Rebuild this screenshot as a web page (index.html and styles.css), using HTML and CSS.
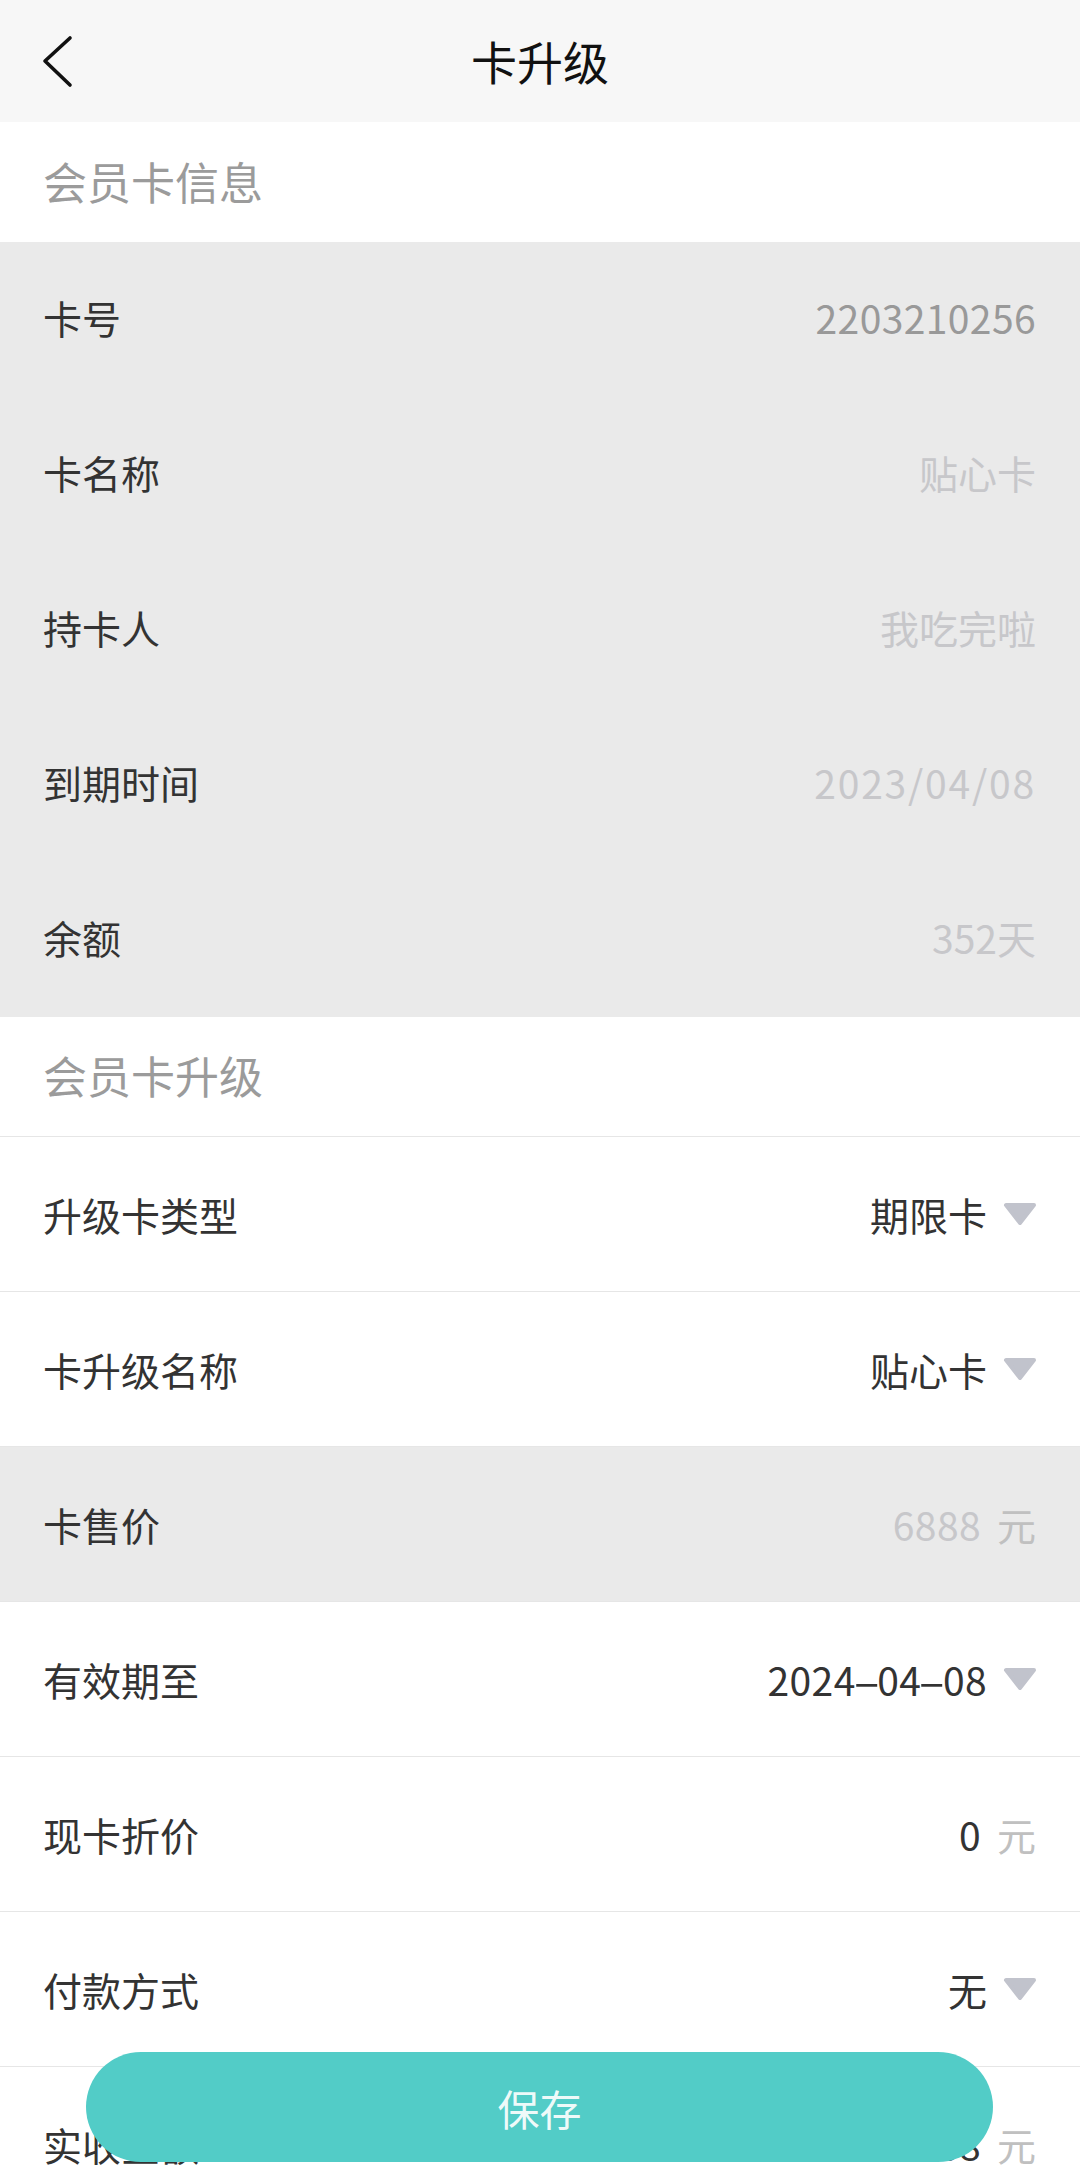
FILE: index.html
```html
<!DOCTYPE html>
<html lang="zh-CN">
<head>
<meta charset="utf-8">
<title>卡升级</title>
<link rel="stylesheet" href="styles.css">
</head>
<body>
<div class="page">
  <header class="nav">
    <span class="nav-back">
      <svg width="40" height="60" viewBox="0 0 40 60"><polyline points="36,5 11,28 36,52" fill="none" stroke="#111" stroke-width="3.6" stroke-linecap="round" stroke-linejoin="round"/></svg>
    </span>
    <h1 class="nav-title">卡升级</h1>
  </header>

  <div class="section-title">会员卡信息</div>
  <div class="group group-readonly">
    <div class="row"><span class="label">卡号</span><span class="value value-mid num">2203210256</span></div>
    <div class="row"><span class="label">卡名称</span><span class="value value-light">贴心卡</span></div>
    <div class="row"><span class="label">持卡人</span><span class="value value-light">我吃完啦</span></div>
    <div class="row"><span class="label">到期时间</span><span class="value value-light date">2023/04/08</span></div>
    <div class="row"><span class="label">余额</span><span class="value value-light">352天</span></div>
  </div>

  <div class="section-title section-title-lined">会员卡升级</div>
  <div class="group">
    <div class="row row-lined"><span class="label">升级卡类型</span><span class="value">期限卡<svg class="caret" width="34" height="24" viewBox="0 0 34 24"><polygon points="3,3 31,3 17,21" fill="#c1c3cc" stroke="#c1c3cc" stroke-width="4" stroke-linejoin="round"/></svg></span></div>
    <div class="row row-lined"><span class="label">卡升级名称</span><span class="value">贴心卡<svg class="caret" width="34" height="24" viewBox="0 0 34 24"><polygon points="3,3 31,3 17,21" fill="#c1c3cc" stroke="#c1c3cc" stroke-width="4" stroke-linejoin="round"/></svg></span></div>
    <div class="row row-lined row-gray"><span class="label">卡售价</span><span class="value value-light num">6888<span class="unit">元</span></span></div>
    <div class="row row-lined"><span class="label">有效期至</span><span class="value num">2024<span class="dash">-</span>04<span class="dash">-</span>08<svg class="caret" width="34" height="24" viewBox="0 0 34 24"><polygon points="3,3 31,3 17,21" fill="#c1c3cc" stroke="#c1c3cc" stroke-width="4" stroke-linejoin="round"/></svg></span></div>
    <div class="row row-lined"><span class="label">现卡折价</span><span class="value num">0<span class="unit">元</span></span></div>
    <div class="row row-lined"><span class="label">付款方式</span><span class="value">无<svg class="caret" width="34" height="24" viewBox="0 0 34 24"><polygon points="3,3 31,3 17,21" fill="#c1c3cc" stroke="#c1c3cc" stroke-width="4" stroke-linejoin="round"/></svg></span></div>
    <div class="row row-lined"><span class="label">实收金额</span><span class="value num">6888<span class="unit">元</span></span></div>
  </div>

  <button class="save-btn" type="button">保存</button>
</div>
</body>
</html>
```
FILE: styles.css
```css
html, body {
  margin: 0;
  padding: 0;
  height: 100%;
  overflow: hidden;
  background: #ffffff;
}

body {
  font-family: "Noto Sans CJK SC", "Noto Sans", sans-serif;
  color: #333333;
}

.page {
  display: flex;
  flex-direction: column;
}

.nav {
  height: 122px;
  background: #f7f7f7;
  display: flex;
  align-items: center;
  justify-content: center;
  position: relative;
}

.nav-back {
  position: absolute;
  left: 34px;
  top: 33px;
  width: 40px;
  height: 60px;
}

.nav-title {
  margin: 0;
  font-size: 46px;
  font-weight: 400;
  color: #111111;
  line-height: 1;
  margin-top: -2px;
}

.section-title {
  height: 120px;
  box-sizing: border-box;
  padding: 0 43px 3px;
  display: flex;
  align-items: center;
  font-size: 44px;
  color: #9b9b9b;
  background: #ffffff;
}

.section-title-lined {
  border-bottom: 1px solid #e6e6e6;
}

.group {
  display: flex;
  flex-direction: column;
}

.group-readonly {
  background: #eaeaea;
}

.row {
  height: 155px;
  box-sizing: border-box;
  padding: 0 44px 0 43px;
  display: flex;
  align-items: center;
  justify-content: space-between;
  font-size: 39px;
}

.group-readonly .row {
  padding-bottom: 6px;
}

.row-lined {
  border-bottom: 1px solid #e6e6e6;
  background: #ffffff;
}

.row-lined.row-gray {
  background: #eaeaea;
}

.label {
  color: #333333;
}

.value {
  display: flex;
  align-items: center;
  color: #333333;
}

.num {
  letter-spacing: 0.4px;
}

.date {
  letter-spacing: 1.8px;
}

.dash {
  display: inline-block;
  padding: 0 4px;
  letter-spacing: 0;
  transform: scaleX(2.1);
}

.value-mid {
  color: #999999;
}

.value-light {
  color: #c7c7ca;
}

.unit {
  margin-left: 16px;
  color: #c0c0c0;
  letter-spacing: 0;
}

.caret {
  margin-left: 16px;
  margin-right: -1px;
}

.save-btn {
  position: fixed;
  left: 86px;
  right: 87px;
  bottom: 3px;
  height: 110px;
  border: none;
  border-radius: 55px;
  background: #52ccc7;
  color: rgba(255, 255, 255, 0.92);
  font-family: "Noto Sans CJK SC", "Noto Sans", sans-serif;
  font-size: 42px;
  padding: 0;
}
```
